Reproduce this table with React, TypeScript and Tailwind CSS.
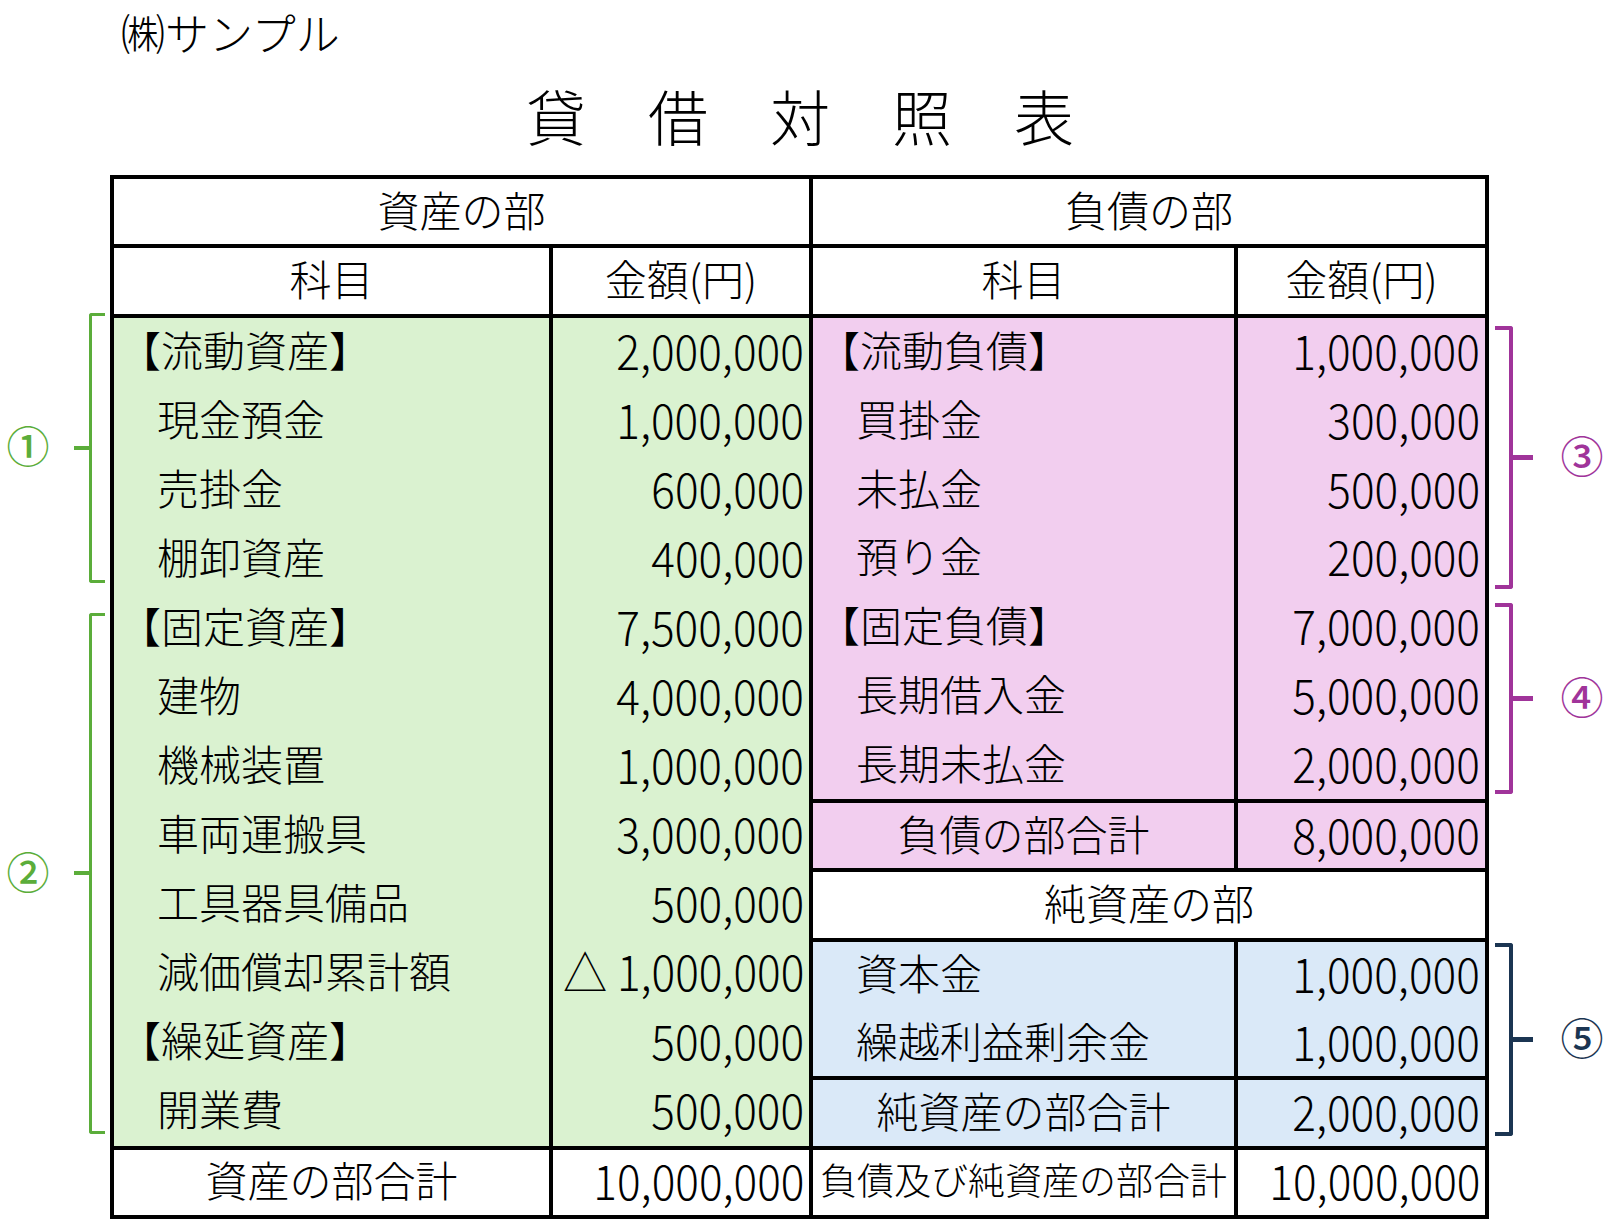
import React from 'react'

type Row = { label: string; amount: string; head?: boolean }

const assetRows: Row[] = [
  { label: '【流動資産】', amount: '2,000,000', head: true },
  { label: '現金預金', amount: '1,000,000' },
  { label: '売掛金', amount: '600,000' },
  { label: '棚卸資産', amount: '400,000' },
  { label: '【固定資産】', amount: '7,500,000', head: true },
  { label: '建物', amount: '4,000,000' },
  { label: '機械装置', amount: '1,000,000' },
  { label: '車両運搬具', amount: '3,000,000' },
  { label: '工具器具備品', amount: '500,000' },
  { label: '減価償却累計額', amount: '△ 1,000,000' },
  { label: '【繰延資産】', amount: '500,000', head: true },
  { label: '開業費', amount: '500,000' },
]

const liabilityRows: Row[] = [
  { label: '【流動負債】', amount: '1,000,000', head: true },
  { label: '買掛金', amount: '300,000' },
  { label: '未払金', amount: '500,000' },
  { label: '預り金', amount: '200,000' },
  { label: '【固定負債】', amount: '7,000,000', head: true },
  { label: '長期借入金', amount: '5,000,000' },
  { label: '長期未払金', amount: '2,000,000' },
]

const equityRows: Row[] = [
  { label: '資本金', amount: '1,000,000' },
  { label: '繰越利益剰余金', amount: '1,000,000' },
]

const tones = {
  green: { text: 'text-[#5bad3a]', bg: 'bg-[#5bad3a]', border: 'border-[#5bad3a]' },
  purple: { text: 'text-[#a0349a]', bg: 'bg-[#a0349a]', border: 'border-[#a0349a]' },
  navy: { text: 'text-[#1b3552]', bg: 'bg-[#1b3552]', border: 'border-[#1b3552]' },
}

const Num = ({ v }: { v: string }) => (
  <span className="inline-block origin-right scale-x-[0.92] text-[48px] leading-none whitespace-pre">{v}</span>
)

const Label = ({ row }: { row: Row }) => (
  <div className={`flex flex-1 items-center pb-[6px] text-[42px] leading-none ${row.head ? 'pl-[5px]' : 'pl-[43px]'}`}>
    {row.label}
  </div>
)

const Amount = ({ row }: { row: Row }) => (
  <div className="flex flex-1 items-center justify-end pr-[5px] pb-[6px]">
    <Num v={row.amount} />
  </div>
)

const Center = ({ text, className }: { text: string; className: string }) => (
  <div className={`flex items-center justify-center pb-[6px] text-[42px] leading-none ${className}`}>{text}</div>
)

const LeftBracket = ({ num, className }: { num: string; className: string }) => {
  const t = tones.green
  return (
    <div className={`flex items-center ${className}`}>
      <div className={`w-[56px] pb-[6px] text-center text-[43px] leading-none font-medium ${t.text}`}>{num}</div>
      <div className="flex-1" />
      <div className={`h-[4px] w-[15px] ${t.bg}`} />
      <div className={`w-[16px] self-stretch rounded-l-[3px] border-y-[3px] border-l-[3px] ${t.border}`} />
      <div className="w-[5px]" />
    </div>
  )
}

const RightBracket = ({ num, tone, className }: { num: string; tone: 'purple' | 'navy'; className: string }) => {
  const t = tones[tone]
  return (
    <div className={`flex items-center ${className}`}>
      <div className="w-[6px]" />
      <div className={`w-[18px] self-stretch rounded-r-[3px] border-y-[4px] border-r-[4px] ${t.border}`} />
      <div className={`h-[5px] w-[20px] ${t.bg}`} />
      <div className="w-[24px]" />
      <div className={`w-[50px] pb-[6px] text-center text-[43px] leading-none font-medium ${t.text}`}>{num}</div>
    </div>
  )
}

export default function App() {
  return (
    <div className="h-[1224px] w-[1616px] overflow-hidden bg-white font-['Noto_Sans_CJK_JP',sans-serif] font-light text-black">
      <div className="h-[64px] pl-[121px] text-[44px] leading-[64px]">㈱サンプル</div>

      <div className="flex h-[111px] items-center justify-center gap-[62px] pr-[16px] pb-[10px] text-[60px] leading-none">
        {'貸借対照表'.split('').map((c) => (
          <span key={c}>{c}</span>
        ))}
      </div>

      <div className="flex">
        {/* left notes */}
        <div className="grid h-[1044px] w-[110px] grid-rows-[repeat(15,minmax(0,1fr))] gap-y-[4px] py-[4px]">
          <LeftBracket num="①" className="row-span-4 row-start-3 mt-[-5px] mb-[8px]" />
          <LeftBracket num="②" className="row-span-8 row-start-7 mt-[18px] mb-[12px]" />
        </div>

        {/* table */}
        <div className="grid h-[1044px] w-[1379px] grid-cols-[435px_256px_421px_247px] grid-rows-[repeat(15,minmax(0,1fr))] gap-[4px] bg-black p-[4px]">
          <Center text="資産の部" className="col-span-2 col-start-1 row-start-1 bg-white" />
          <Center text="負債の部" className="col-span-2 col-start-3 row-start-1 bg-white" />
          <Center text="科目" className="col-start-1 row-start-2 bg-white" />
          <Center text="金額(円)" className="col-start-2 row-start-2 bg-white" />
          <Center text="科目" className="col-start-3 row-start-2 bg-white" />
          <Center text="金額(円)" className="col-start-4 row-start-2 bg-white" />

          <div className="col-start-1 row-span-12 row-start-3 flex flex-col bg-[#daf2d0]">
            {assetRows.map((r) => (
              <Label key={r.label} row={r} />
            ))}
          </div>
          <div className="col-start-2 row-span-12 row-start-3 flex flex-col bg-[#daf2d0]">
            {assetRows.map((r) => (
              <Amount key={r.label} row={r} />
            ))}
          </div>

          <div className="col-start-3 row-span-7 row-start-3 flex flex-col bg-[#f2ceef]">
            {liabilityRows.map((r) => (
              <Label key={r.label} row={r} />
            ))}
          </div>
          <div className="col-start-4 row-span-7 row-start-3 flex flex-col bg-[#f2ceef]">
            {liabilityRows.map((r) => (
              <Amount key={r.label} row={r} />
            ))}
          </div>
          <Center text="負債の部合計" className="col-start-3 row-start-10 bg-[#f2ceef]" />
          <div className="col-start-4 row-start-10 flex bg-[#f2ceef]">
            <Amount row={{ label: '', amount: '8,000,000' }} />
          </div>

          <Center text="純資産の部" className="col-span-2 col-start-3 row-start-11 bg-white" />

          <div className="col-start-3 row-span-2 row-start-12 flex flex-col bg-[#dae9f8]">
            {equityRows.map((r) => (
              <Label key={r.label} row={r} />
            ))}
          </div>
          <div className="col-start-4 row-span-2 row-start-12 flex flex-col bg-[#dae9f8]">
            {equityRows.map((r) => (
              <Amount key={r.label} row={r} />
            ))}
          </div>
          <Center text="純資産の部合計" className="col-start-3 row-start-14 bg-[#dae9f8]" />
          <div className="col-start-4 row-start-14 flex bg-[#dae9f8]">
            <Amount row={{ label: '', amount: '2,000,000' }} />
          </div>

          <Center text="資産の部合計" className="col-start-1 row-start-15 bg-white" />
          <div className="col-start-2 row-start-15 flex bg-white">
            <Amount row={{ label: '', amount: '10,000,000' }} />
          </div>
          <div className="col-start-3 row-start-15 flex items-center justify-center bg-white pb-[5px] text-[37px] leading-none">
            負債及び純資産の部合計
          </div>
          <div className="col-start-4 row-start-15 flex bg-white">
            <Amount row={{ label: '', amount: '10,000,000' }} />
          </div>
        </div>

        {/* right notes */}
        <div className="grid h-[1044px] flex-1 grid-rows-[repeat(15,minmax(0,1fr))] gap-y-[4px] py-[4px]">
          <RightBracket num="③" tone="purple" className="row-span-4 row-start-3 mt-[8px] mb-[2px]" />
          <RightBracket num="④" tone="purple" className="row-span-3 row-start-7 mt-[8px] mb-[5px]" />
          <RightBracket num="⑤" tone="navy" className="row-span-3 row-start-12 mt-[1px] mb-[10px]" />
        </div>
      </div>
    </div>
  )
}
